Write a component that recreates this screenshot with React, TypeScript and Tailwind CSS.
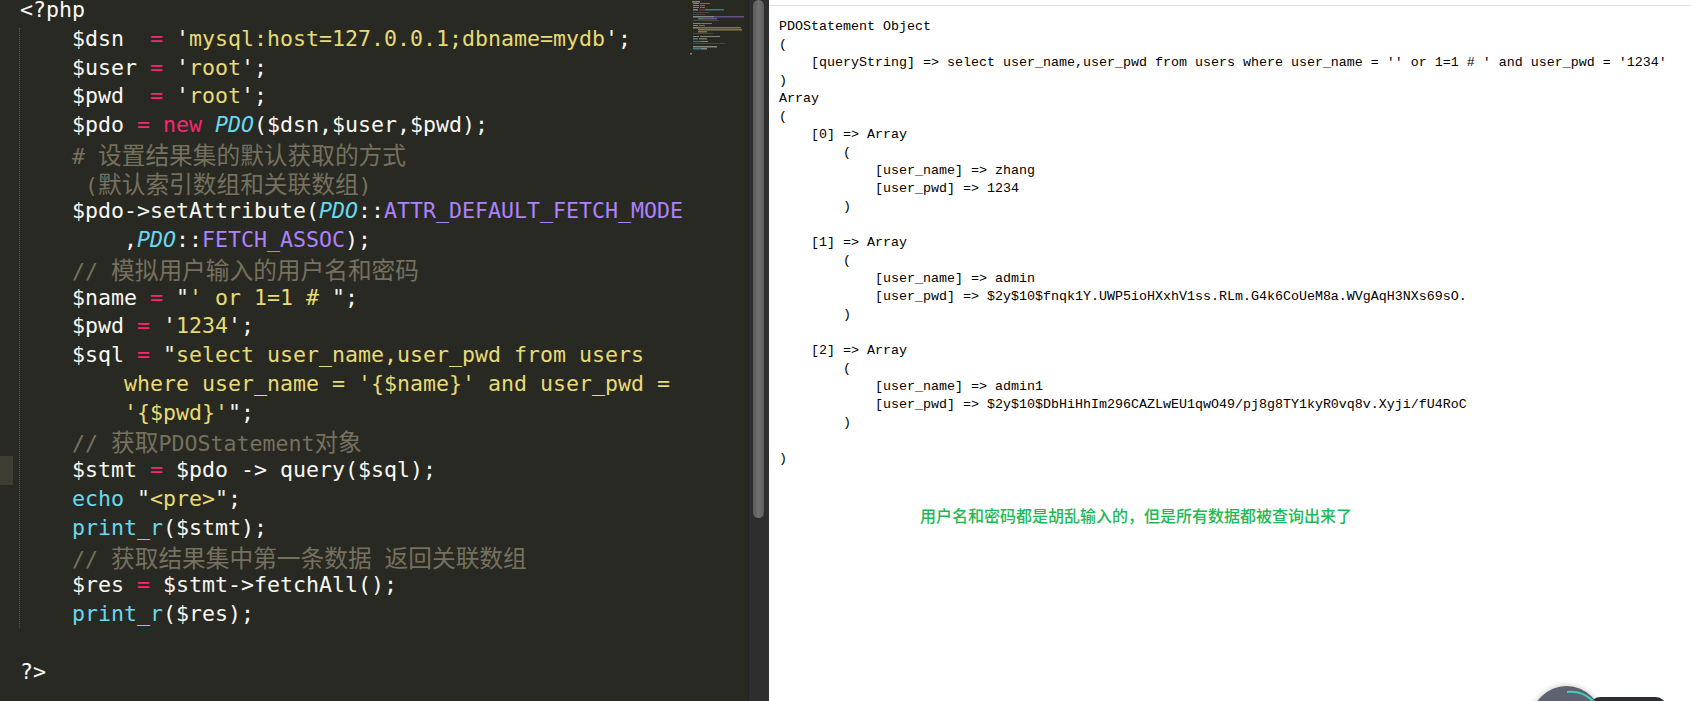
const mono = "font-['DejaVu_Sans_Mono','Noto_Sans_CJK_SC',monospace]";

const W = ({ children }: { children: React.ReactNode }) => <span className="text-[#f8f8f2]">{children}</span>;
const P = ({ children }: { children: React.ReactNode }) => <span className="text-[#f92672]">{children}</span>;
const Y = ({ children }: { children: React.ReactNode }) => <span className="text-[#e6db74]">{children}</span>;
const B = ({ children }: { children: React.ReactNode }) => <span className="text-[#66d9ef]">{children}</span>;
const I = ({ children }: { children: React.ReactNode }) => <span className="italic text-[#66d9ef]">{children}</span>;
const V = ({ children }: { children: React.ReactNode }) => <span className="text-[#ae81ff]">{children}</span>;
const C = ({ children }: { children: React.ReactNode }) => <span className="text-[#75715e]">{children}</span>;
const Z = ({ children }: { children: React.ReactNode }) => (
  <span className="inline-block h-[28px] font-['Noto_Sans_CJK_SC',sans-serif] text-[23.7px] leading-[28px] text-[#75715e]">{children}</span>
);

const Line = ({ indent = 0, children }: { indent?: number; children?: React.ReactNode }) => (
  <div className="h-[28.77px] whitespace-pre" style={{ paddingLeft: indent * 13 }}>
    {children}
  </div>
);

const CodePane = () => (
  <div className={`${mono} pl-[20px] text-[21.6px] leading-[28.77px] text-[#f8f8f2]`}>
    <div className="h-[24.77px] whitespace-pre leading-[20px]"><W>{"<?php"}</W></div>
    <Line indent={4}><W>$dsn  </W><P>=</P><W> '</W><Y>mysql:host=127.0.0.1;dbname=mydb</Y><W>';</W></Line>
    <Line indent={4}><W>$user </W><P>=</P><W> '</W><Y>root</Y><W>';</W></Line>
    <Line indent={4}><W>$pwd  </W><P>=</P><W> '</W><Y>root</Y><W>';</W></Line>
    <Line indent={4}><W>$pdo </W><P>= new</P> <I>PDO</I><W>($dsn,$user,$pwd);</W></Line>
    <Line indent={4}><C># </C><Z>设置结果集的默认获取的方式</Z></Line>
    <Line indent={4}><C> (</C><Z>默认索引数组和关联数组</Z><C>)</C></Line>
    <Line indent={4}><W>$pdo-&gt;setAttribute(</W><I>PDO</I><W>::</W><V>ATTR_DEFAULT_FETCH_MODE</V></Line>
    <Line indent={8}><W>,</W><I>PDO</I><W>::</W><V>FETCH_ASSOC</V><W>);</W></Line>
    <Line indent={4}><C>// </C><Z>模拟用户输入的用户名和密码</Z></Line>
    <Line indent={4}><W>$name </W><P>=</P><W> "</W><Y>' or 1=1 # </Y><W>";</W></Line>
    <Line indent={4}><W>$pwd </W><P>=</P><W> '</W><Y>1234</Y><W>';</W></Line>
    <Line indent={4}><W>$sql </W><P>=</P><W> "</W><Y>select user_name,user_pwd from users</Y></Line>
    <Line indent={8}><Y>where user_name = '{"{$name}"}' and user_pwd =</Y></Line>
    <Line indent={8}><Y>'{"{$pwd}"}'</Y><W>";</W></Line>
    <Line indent={4}><C>// </C><Z>获取</Z><C>PDOStatement</C><Z>对象</Z></Line>
    <Line indent={4}><W>$stmt </W><P>=</P><W> $pdo -&gt; query($sql);</W></Line>
    <Line indent={4}><B>echo</B><W> "</W><Y>{"<pre>"}</Y><W>";</W></Line>
    <Line indent={4}><B>print_r</B><W>($stmt);</W></Line>
    <Line indent={4}><C>// </C><Z>获取结果集中第一条数据</Z><C> </C><Z>返回关联数组</Z></Line>
    <Line indent={4}><W>$res </W><P>=</P><W> $stmt-&gt;fetchAll();</W></Line>
    <Line indent={4}><B>print_r</B><W>($res);</W></Line>
    <Line />
    <Line><W>?&gt;</W></Line>
  </div>
);

const Minimap = () => (
  <svg className="absolute left-[690px] top-0" width="58" height="60" viewBox="0 0 58 60">
    <g opacity="0.45">
      <rect x="2" y="1" width="8" height="1.5" fill="#f8f8f2" />
      <rect x="3" y="3" width="6" height="1" fill="#f8f8f2" /><rect x="10" y="3" width="10" height="1" fill="#e6db74" />
      <rect x="3" y="5" width="6" height="1" fill="#f8f8f2" /><rect x="10" y="5" width="5" height="1" fill="#e6db74" />
      <rect x="3" y="7" width="6" height="1" fill="#f8f8f2" /><rect x="10" y="7" width="5" height="1" fill="#e6db74" />
      <rect x="3" y="9" width="5" height="1.5" fill="#f8f8f2" /><rect x="9" y="9" width="6" height="1.5" fill="#f92672" /><rect x="15" y="9" width="19" height="1.5" fill="#66d9ef" />
      <rect x="3" y="12" width="16" height="1" fill="#75715e" />
      <rect x="3" y="14" width="12" height="1" fill="#75715e" />
      <rect x="3" y="16" width="21" height="1.5" fill="#f8f8f2" /><rect x="24" y="16" width="30" height="1.5" fill="#ae81ff" />
      <rect x="8" y="18" width="5" height="1.5" fill="#66d9ef" /><rect x="13" y="18" width="14" height="1.5" fill="#ae81ff" />
      <rect x="3" y="20" width="26" height="1" fill="#75715e" />
      <rect x="3" y="23" width="7" height="1" fill="#f8f8f2" /><rect x="10" y="23" width="12" height="1" fill="#e6db74" />
      <rect x="3" y="25" width="5" height="1" fill="#f8f8f2" /><rect x="9" y="25" width="6" height="1" fill="#e6db74" />
      <rect x="3" y="27" width="6" height="1.5" fill="#f8f8f2" /><rect x="9" y="27" width="42" height="1.5" fill="#e6db74" />
      <rect x="8" y="29" width="44" height="1.5" fill="#e6db74" />
      <rect x="8" y="31" width="9" height="1.5" fill="#e6db74" />
      <rect x="3" y="33" width="20" height="1" fill="#75715e" />
      <rect x="3" y="36" width="6" height="1" fill="#f8f8f2" /><rect x="10" y="36" width="20" height="1" fill="#f8f8f2" />
      <rect x="3" y="38" width="5" height="1.5" fill="#66d9ef" /><rect x="9" y="38" width="8" height="1.5" fill="#e6db74" />
      <rect x="3" y="41" width="8" height="1" fill="#66d9ef" /><rect x="11" y="41" width="7" height="1" fill="#f8f8f2" />
      <rect x="3" y="43" width="32" height="1" fill="#75715e" />
      <rect x="3" y="46" width="24" height="1.5" fill="#f8f8f2" />
      <rect x="3" y="48" width="8" height="1.5" fill="#66d9ef" /><rect x="11" y="48" width="6" height="1.5" fill="#f8f8f2" />
      <rect x="0" y="53" width="2" height="1.5" fill="#f8f8f2" />
    </g>
  </svg>
);

const output = `PDOStatement Object
(
    [queryString] => select user_name,user_pwd from users where user_name = '' or 1=1 # ' and user_pwd = '1234'
)
Array
(
    [0] => Array
        (
            [user_name] => zhang
            [user_pwd] => 1234
        )

    [1] => Array
        (
            [user_name] => admin
            [user_pwd] => $2y$10$fnqk1Y.UWP5ioHXxhV1ss.RLm.G4k6CoUeM8a.WVgAqH3NXs69sO.
        )

    [2] => Array
        (
            [user_name] => admin1
            [user_pwd] => $2y$10$DbHiHhIm296CAZLwEU1qwO49/pj8g8TY1kyR0vq8v.Xyji/fU4RoC
        )

)`;

export default function App() {
  return (
    <div className="relative flex h-[701px] w-[1691px] overflow-hidden bg-white">
      <div className="relative h-full w-[748px] overflow-hidden bg-[#292923]">
        <CodePane />
        {/* gutter highlight + indent guide */}
        <div className="absolute left-0 top-[456px] h-[29px] w-[13px] bg-[#3e3d32]" />
        <div className="absolute left-[19px] top-[28px] h-[600px] border-l border-dotted border-[#55554c]" />
        <Minimap />
      </div>

      {/* scrollbar */}
      <div className="h-full w-[21px] border-l border-[#222220] bg-[#2e2e2e] pl-[4px] pr-[5px]">
        <div className="h-[518px] w-[11px] rounded-b-[6px] rounded-t-[6px] bg-gradient-to-r from-[#5a5a5a] via-[#707070] to-[#5e5e5e]" />
      </div>

      <div className="flex-1 bg-white">
        <div className="mt-[5px] h-px bg-[#e3e3e3]" />
        <pre className="mt-[12px] pl-[10px] font-['Liberation_Mono',monospace] text-[13.33px] leading-[18px] text-black">{output}</pre>
        <div className="ml-[151px] mt-[36px] font-['Noto_Sans_CJK_SC',sans-serif] text-[16px] font-medium leading-[22px] text-[#1db954]">
          用户名和密码都是胡乱输入的，但是所有数据都被查询出来了
        </div>
      </div>

      {/* floating widget cut off by the bottom edge */}
      <div className="absolute left-[1590px] top-[697px] h-[30px] w-[76px] rounded-[10px] bg-[#2b2d33]" />
      <div className="absolute left-[1531px] top-[686px] h-[71px] w-[71px] rounded-full bg-[#5e6270] shadow-[0_0_6px_rgba(0,0,0,0.25)]">
        <svg className="absolute inset-0" width="71" height="71" viewBox="0 0 71 71">
          <path d="M36 6 A32 32 0 0 1 62 15" fill="none" stroke="#3ecfbf" strokeWidth="2" />
        </svg>
      </div>
    </div>
  );
}
